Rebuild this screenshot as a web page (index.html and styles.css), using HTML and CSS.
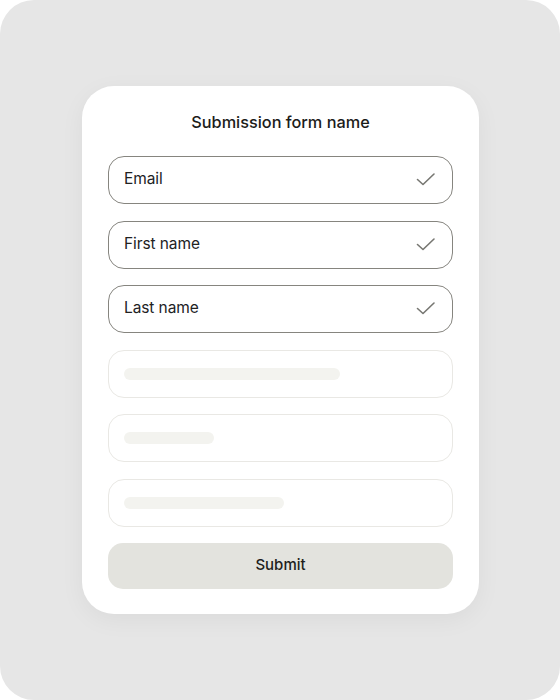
FILE: index.html
```html
<!DOCTYPE html>
<html>
<head>
<meta charset="utf-8">
<link rel="stylesheet" href="styles.css">
</head>
<body>
<div class="stage">
  <div class="card">
    <h1 class="title">Submission form name</h1>
    <div class="fields">
      <div class="field filled"><span class="label">Email</span>
        <svg class="check" width="20" height="20" viewBox="0 0 20 20"><path d="M1.5 9.5 L7 14.5 L18 4" fill="none" stroke="#777772" stroke-width="1.6" stroke-linecap="round" stroke-linejoin="round"/></svg>
      </div>
      <div class="field filled"><span class="label">First name</span>
        <svg class="check" width="20" height="20" viewBox="0 0 20 20"><path d="M1.5 9.5 L7 14.5 L18 4" fill="none" stroke="#777772" stroke-width="1.6" stroke-linecap="round" stroke-linejoin="round"/></svg>
      </div>
      <div class="field filled"><span class="label">Last name</span>
        <svg class="check" width="20" height="20" viewBox="0 0 20 20"><path d="M1.5 9.5 L7 14.5 L18 4" fill="none" stroke="#777772" stroke-width="1.6" stroke-linecap="round" stroke-linejoin="round"/></svg>
      </div>
      <div class="field empty"><span class="bar bar-long"></span></div>
      <div class="field empty"><span class="bar bar-short"></span></div>
      <div class="field empty"><span class="bar bar-mid"></span></div>
      <button class="submit">Submit</button>
    </div>
  </div>
</div>
</body>
</html>
```
FILE: styles.css
```css
* { box-sizing: border-box; }
html, body { margin: 0; padding: 0; background: #ffffff; }
body { font-family: Inter, "Noto Sans", sans-serif; }
.stage {
  width: 560px;
  height: 700px;
  background: #e6e6e6;
  border-radius: 34px;
  display: flex;
  align-items: flex-start;
  justify-content: center;
  padding-top: 86px;
  padding-left: 1px;
}
.card {
  width: 397px;
  height: 528px;
  background: #ffffff;
  border-radius: 32px;
  box-shadow: 0 6px 24px rgba(0,0,0,0.05);
  padding: 26px 26px 25px;
}
.title {
  margin: 0;
  font-size: 16.3px;
  line-height: 20px;
  font-weight: 450;
  color: #1c1c1a;
  text-align: center;
}
.fields {
  margin-top: 24px;
  display: flex;
  flex-direction: column;
  gap: 16.5px;
}
.field {
  height: 48px;
  border-radius: 16px;
  display: flex;
  align-items: center;
  justify-content: space-between;
  padding: 0 15px 0 15px;
}
.filled { border: 1px solid #86857f; }
.empty { border: 1px solid #e9e8e4; }
.label {
  font-size: 15.5px;
  color: #22221f;
  letter-spacing: -0.1px;
  margin-bottom: 3px;
}
.check { margin-right: 1px; margin-top: 0; }
.bar {
  display: block;
  height: 12px;
  border-radius: 6px;
  background: #f3f3ef;
}
.bar-long { width: 216px; }
.bar-short { width: 90px; }
.bar-mid { width: 160px; }
.submit {
  margin-top: 0;
  height: 46px;
  border: none;
  border-radius: 15px;
  background: #e3e3de;
  font-family: Inter, "Noto Sans", sans-serif;
  font-size: 15px;
  font-weight: 450;
  color: #1e1e1c;
  padding: 0 0 3px;
}
```
